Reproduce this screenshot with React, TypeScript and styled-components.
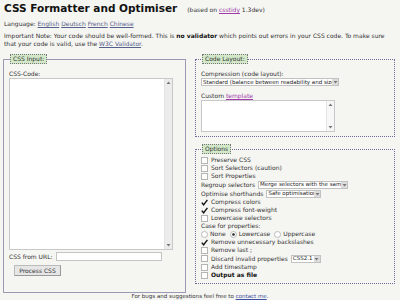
import React from 'react'
import styled, { createGlobalStyle } from 'styled-components'

const GlobalStyle = createGlobalStyle`
  html, body {
    margin: 0;
    padding: 0;
    background: #f5f5f2;
  }
  body {
    font-family: "DejaVu Sans", Verdana, sans-serif;
    font-size: 6px;
    line-height: 8px;
    color: #333;
  }
`

const Page = styled.div`
  width: 400px;
  height: 300px;
  overflow: hidden;
  padding: 0 4px;
  box-sizing: border-box;
`

const Header = styled.div`
  display: flex;
  align-items: baseline;
  gap: 10px;
  padding-top: 2px;
  height: 14px;
`

const Title = styled.h1`
  margin: 0;
  font-size: 10.5px;
  line-height: 12px;
  font-weight: bold;
  color: #111;
`

const Small = styled.span`
  font-size: 6px;
`

const Link = styled.a<{ $tone?: 'visited' | 'plain' | 'blue' }>`
  color: ${p => (p.$tone === 'visited' ? '#a03ca8' : p.$tone === 'blue' ? '#3a4fa0' : '#55608a')};
  text-decoration: underline;
`

const Line = styled.p`
  margin: 4px 0 0;
`

const Note = styled.p`
  margin: 4px 0 0;
  b {
    color: #111;
  }
`

const Columns = styled.div`
  display: grid;
  grid-template-columns: 183px 200px;
  column-gap: 9px;
  align-items: start;
  margin-top: 6px;
  margin-left: -1px;
`

const Fieldset = styled.fieldset<{ $dotted?: boolean }>`
  margin: 0;
  padding: 0 5px 4px;
  border: 1px ${p => (p.$dotted ? 'dotted #6c6c9c' : 'solid #9a9ab4')};
  min-width: 0;
`

const Legend = styled.legend`
  background: #d2e8c9;
  border: 1px dotted #777;
  padding: 0 2px;
  margin-left: 1px;
  line-height: 8px;
  color: #333;
`

const RightCol = styled.div`
  display: flex;
  flex-direction: column;
  gap: 7px;
`

const Label = styled.div`
  margin-top: 6px;
`

const TextBox = styled.div<{ $w: number; $h: number }>`
  display: flex;
  width: ${p => p.$w}px;
  height: ${p => p.$h}px;
  border: 1px solid #c8c8c8;
  background: #fff;
  box-sizing: border-box;
`

const TextArea = styled.textarea`
  flex: 1;
  border: none;
  outline: none;
  resize: none;
  padding: 0;
  background: transparent;
`

const Scroll = styled.div<{ $dots?: boolean }>`
  width: 7px;
  display: flex;
  flex-direction: column;
  justify-content: space-between;
  align-items: center;
  background: ${p => (p.$dots ? '#f7f7f7' : '#ececec')};
  border-left: 1px solid #e4e4e4;
  padding: 2px 0;
`

const Arrow: React.FC<{ down?: boolean }> = ({ down }) => (
  <svg width="5" height="4" viewBox="0 0 5 4">
    <path d={down ? 'M0.5 1 L4.5 1 L2.5 3.5 Z' : 'M0.5 3 L4.5 3 L2.5 0.5 Z'} fill="#777" />
  </svg>
)

const UrlRow = styled.div`
  display: flex;
  align-items: center;
  gap: 3px;
  margin-top: 2px;
`

const Input = styled.div`
  width: 106px;
  height: 9px;
  border: 1px solid #c4c4c4;
  background: #fff;
  box-sizing: border-box;
`

const Button = styled.button`
  margin: 4px 0 0 5px;
  width: 47px;
  height: 11px;
  padding: 0;
  font: inherit;
  font-size: 6px;
  line-height: 8px;
  color: #333;
  background: #e6e6e6;
  border: 1px solid #bbb;
  border-right-color: #999;
  border-bottom-color: #999;
`

const SelectBox = styled.div<{ $w: number }>`
  display: inline-flex;
  align-items: center;
  width: ${p => p.$w}px;
  height: 8px;
  border: 1px solid #c2c2c2;
  background: #fff;
  box-sizing: border-box;
  overflow: hidden;
  vertical-align: middle;
`

const SelectText = styled.span`
  flex: 1;
  white-space: nowrap;
  overflow: hidden;
  font-size: 5.5px;
  line-height: 7px;
  padding-left: 1px;
  color: #222;
`

const SelectButton = styled.span`
  width: 6px;
  height: 6px;
  background: #dcdcdc;
  display: flex;
  align-items: center;
  justify-content: center;
  flex: none;
`

const Select: React.FC<{ w: number; text: string }> = ({ w, text }) => (
  <SelectBox $w={w}>
    <SelectText>{text}</SelectText>
    <SelectButton>
      <Arrow down />
    </SelectButton>
  </SelectBox>
)

const Options = styled.div`
  display: flex;
  flex-direction: column;
  margin-top: 2px;
`

const Row = styled.div<{ $tall?: boolean }>`
  display: flex;
  align-items: center;
  gap: 3px;
  height: ${p => (p.$tall ? '9px' : '8px')};
  white-space: nowrap;
  b {
    color: #111;
  }
`

const Check: React.FC<{ checked?: boolean }> = ({ checked }) => (
  <svg width="7" height="7" viewBox="0 0 7 7">
    {!checked && <rect x="0.5" y="0.5" width="6" height="6" fill="#fff" stroke="#b4b4b4" />}
    {checked && <path d="M0.8 3.6 L2.6 5.8 L6.4 0.8" fill="none" stroke="#111" strokeWidth="1.4" />}
  </svg>
)

const Radio: React.FC<{ on?: boolean }> = ({ on }) => (
  <svg width="7" height="7" viewBox="0 0 7 7">
    <circle cx="3.5" cy="3.5" r="3" fill="#fff" stroke="#bbb" />
    {on && <circle cx="3.5" cy="3.5" r="1.3" fill="#222" />}
  </svg>
)

const RadioRow = styled.div`
  display: flex;
  align-items: center;
  gap: 2px;
  height: 8px;
  span + svg {
    margin-left: 2px;
  }
`

const Footer = styled.div`
  text-align: center;
  margin-top: 0;
  font-size: 5.5px;
  line-height: 7px;
`

const checks: [string, boolean][] = [
  ['Preserve CSS', false],
  ['Sort Selectors (caution)', false],
  ['Sort Properties', false],
]

const App: React.FC = () => (
  <>
    <GlobalStyle />
    <Page>
      <Header>
        <Title>CSS Formatter and Optimiser</Title>
        <Small>
          (based on <Link $tone="visited" href="#">csstidy</Link> 1.3dev)
        </Small>
      </Header>
      <Line>
        Language: <Link href="#">English</Link> <Link href="#">Deutsch</Link> <Link href="#">French</Link>{' '}
        <Link href="#">Chinese</Link>
      </Line>
      <Note>
        Important Note: Your code should be well-formed. This is <b>no validator</b> which points out errors in your CSS
        code. To make sure that your code is valid, use the <Link href="#">W3C Validator</Link>.
      </Note>
      <Columns>
        <Fieldset style={{ height: 233 }}>
          <Legend>CSS Input:</Legend>
          <Label>CSS-Code:</Label>
          <TextBox $w={164} $h={172}>
            <TextArea />
            <Scroll>
              <Arrow />
              <Arrow down />
            </Scroll>
          </TextBox>
          <UrlRow>
            <span>CSS from URL:</span>
            <Input />
          </UrlRow>
          <Button>Process CSS</Button>
        </Fieldset>
        <RightCol>
          <Fieldset $dotted>
            <Legend>Code Layout:</Legend>
            <Label>Compression (code layout):</Label>
            <Select w={138} text="Standard (balance between readability and size)" />
            <Label>
              Custom <Link $tone="visited" href="#">template</Link>
            </Label>
            <TextBox $w={134} $h={32}>
              <TextArea />
              <Scroll $dots>
                <Arrow />
                <Arrow down />
              </Scroll>
            </TextBox>
          </Fieldset>
          <Fieldset $dotted>
            <Legend>Options</Legend>
            <Options>
              {checks.map(([t, c]) => (
                <Row key={t}>
                  <Check checked={c} />
                  <span>{t}</span>
                </Row>
              ))}
              <Row $tall>
                <span>Regroup selectors</span>
                <Select w={90} text="Merge selectors with the same properties" />
              </Row>
              <Row $tall>
                <span>Optimise shorthands</span>
                <Select w={55} text="Safe optimisations" />
              </Row>
              <Row>
                <Check checked />
                <span>Compress colors</span>
              </Row>
              <Row>
                <Check checked />
                <span>Compress font-weight</span>
              </Row>
              <Row>
                <Check />
                <span>Lowercase selectors</span>
              </Row>
              <Row>
                <span>Case for properties:</span>
              </Row>
              <RadioRow>
                <Radio />
                <span>None</span>
                <Radio on />
                <span>Lowercase</span>
                <Radio />
                <span>Uppercase</span>
              </RadioRow>
              <Row>
                <Check checked />
                <span>Remove unnecessary backslashes</span>
              </Row>
              <Row>
                <Check />
                <span>Remove last ;</span>
              </Row>
              <Row $tall>
                <Check />
                <span>Discard invalid properties</span>
                <Select w={30} text="CSS2.1" />
              </Row>
              <Row>
                <Check />
                <span>Add timestamp</span>
              </Row>
              <Row>
                <Check />
                <b>Output as file</b>
              </Row>
            </Options>
          </Fieldset>
        </RightCol>
      </Columns>
      <Footer>
        For bugs and suggestions feel free to <Link $tone="blue" href="#">contact me</Link>.
      </Footer>
    </Page>
  </>
)

export default App
